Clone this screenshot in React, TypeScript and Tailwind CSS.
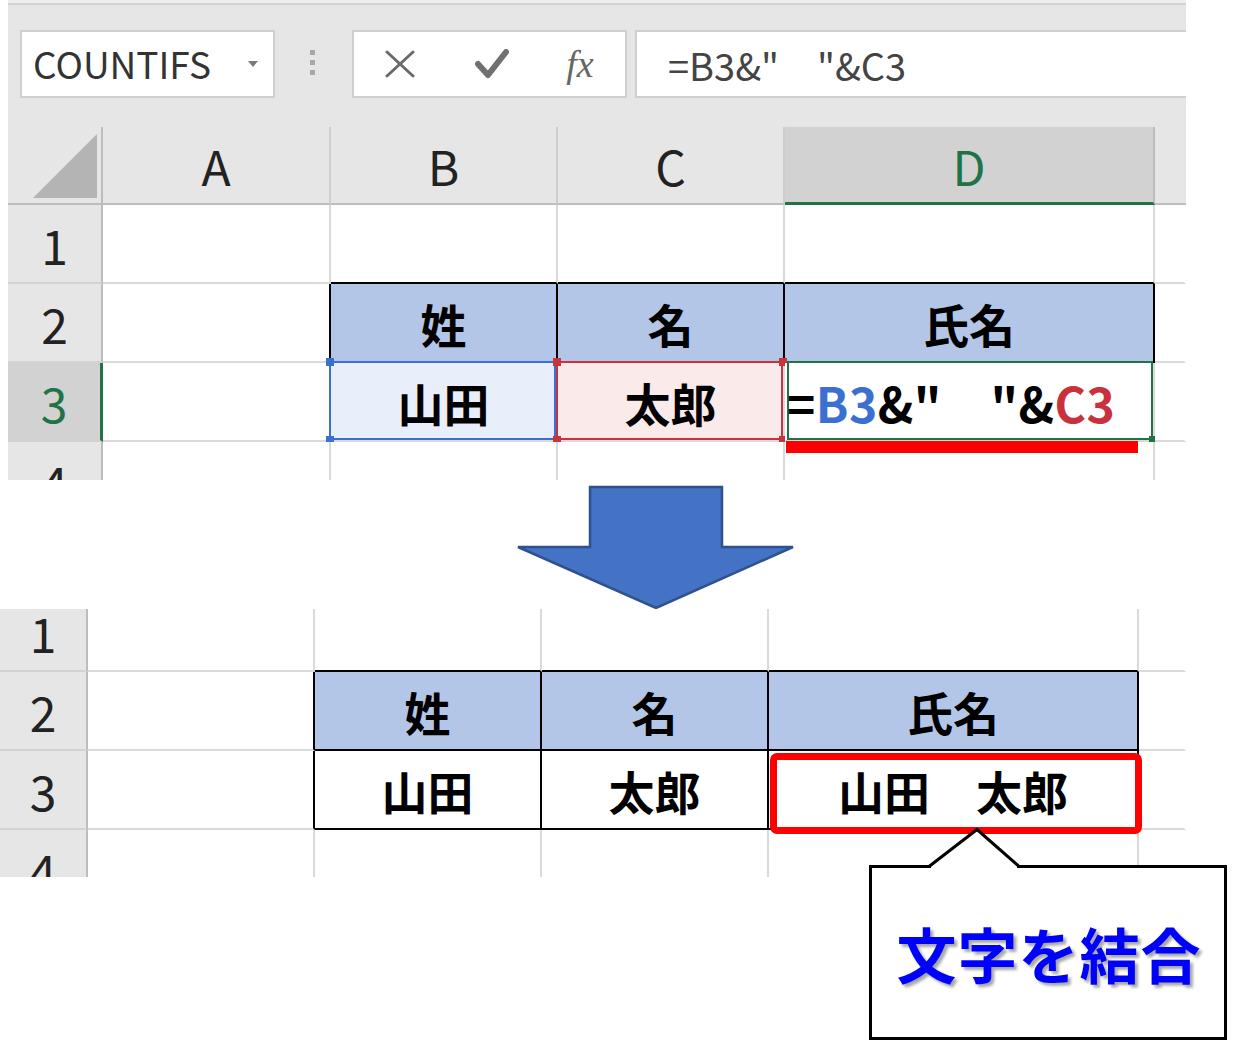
import React from "react";

const jp = "[font-family:'Noto_Sans_CJK_JP','Noto_Sans',sans-serif]";

type Side = "g" | "k" | "n";

const rightBorder: Record<Side, string> = {
  g: "border-r-2 border-r-[#dadada]",
  k: "border-r-2 border-r-black",
  n: "border-r-2 border-r-transparent",
};
const bottomBorder: Record<Side, string> = {
  g: "border-b-2 border-b-[#dadada]",
  k: "border-b-2 border-b-black",
  n: "border-b-2 border-b-transparent",
};

function Cell({
  r = "g",
  b = "g",
  bg = "bg-white",
  className = "",
  children,
}: {
  r?: Side;
  b?: Side;
  bg?: string;
  className?: string;
  children?: React.ReactNode;
}) {
  return (
    <div
      className={`relative flex items-center justify-center ${rightBorder[r]} ${bottomBorder[b]} ${bg} ${className}`}
    >
      {children}
    </div>
  );
}

function RowHead({ n, selected = false }: { n: number; selected?: boolean }) {
  return (
    <div
      className={`flex items-center justify-center border-b-2 border-b-[#d2d2d2] text-[48px] leading-none ${
        selected
          ? "bg-[#d2d2d2] border-r-[3px] border-r-[#217346] text-[#217346]"
          : "bg-[#e6e6e6] border-r-2 border-r-[#bdbdbd] text-[#222]"
      }`}
    >
      {n}
    </div>
  );
}

function Handle({ pos, color }: { pos: string; color: string }) {
  return <span className={`absolute w-[8px] h-[8px] ${pos} ${color}`} />;
}

function Toolbar() {
  return (
    <div className="h-[127px] shrink-0 flex flex-col">
      <div className="h-[3px] bg-[#efefef]" />
      <div className="flex-1 border-t-2 border-[#d2d2d2] flex items-start pt-[25px]">
        {/* name box */}
        <div className="ml-[12px] w-[255px] h-[68px] bg-white border-2 border-[#cfcfcf] flex items-center justify-between pl-[11px] pr-[14px]">
          <span className="text-[37px] text-[#333]">COUNTIFS</span>
          <svg width="12" height="8" viewBox="0 0 12 8">
            <path d="M1 1 L11 1 L6 7 Z" fill="#7a7a7a" />
          </svg>
        </div>
        {/* dots */}
        <div className="ml-[35px] mt-[20px] flex flex-col gap-[5px]">
          <span className="w-[5px] h-[5px] bg-[#a8a8a8]" />
          <span className="w-[5px] h-[5px] bg-[#a8a8a8]" />
          <span className="w-[5px] h-[5px] bg-[#a8a8a8]" />
        </div>
        {/* formula buttons */}
        <div className="ml-[37px] w-[275px] h-[68px] bg-white border-2 border-[#cfcfcf] flex items-center">
          <div className="w-[92px] flex justify-center">
            <svg width="30" height="30" viewBox="0 0 30 30">
              <path d="M2 3 L28 27 M28 3 L2 27" stroke="#6a6a6a" strokeWidth="3" strokeLinecap="round" />
            </svg>
          </div>
          <div className="w-[92px] flex justify-center">
            <svg width="34" height="30" viewBox="0 0 34 30">
              <path d="M3 15 L13 26 L31 3" stroke="#707070" strokeWidth="6" fill="none" strokeLinejoin="round" strokeLinecap="round" />
            </svg>
          </div>
          <div className="w-[84px] flex justify-center">
            <span className="[font-family:'Liberation_Serif',serif] italic text-[38px] text-[#666] leading-none">
              fx
            </span>
          </div>
        </div>
        {/* formula box */}
        <div className="ml-[8px] flex-1 h-[68px] bg-white border-y-2 border-l-2 border-[#cfcfcf] flex items-center pl-[31px]">
          <span className="text-[38px] text-[#444] whitespace-pre">=B3&amp;"　"&amp;C3</span>
        </div>
      </div>
    </div>
  );
}

function TopSheet() {
  return (
    <div className={`ml-[8px] w-[1178px] h-[480px] overflow-hidden bg-[#e6e6e6] flex flex-col ${jp}`}>
      <Toolbar />
      <div className="shrink-0 grid grid-cols-[95px_228px_227px_227px_370px_31px] grid-rows-[78px_79px_79px_79px_79px]">
        {/* column headers */}
        <div className="relative bg-[#e6e6e6] border-r-2 border-r-[#bdbdbd] border-b-2 border-b-[#bdbdbd]">
          <svg className="absolute left-[24px] top-[6px]" width="66" height="66" viewBox="0 0 66 66">
            <path d="M1 65 L65 65 L65 1 Z" fill="#b4b4b4" />
          </svg>
        </div>
        {["A", "B", "C"].map((c) => (
          <div
            key={c}
            className="flex items-center justify-center bg-[#e6e6e6] border-r-2 border-r-[#cdcdcd] border-b-2 border-b-[#bdbdbd] text-[48px] leading-none text-[#222]"
          >
            {c}
          </div>
        ))}
        <div className="flex items-center justify-center bg-[#d2d2d2] border-r-2 border-r-[#bdbdbd] border-b-[3px] border-b-[#217346] text-[48px] leading-none text-[#217346]">
          D
        </div>
        <div className="bg-[#e6e6e6] border-b-2 border-b-[#bdbdbd]" />

        {/* row 1 */}
        <RowHead n={1} />
        <Cell />
        <Cell b="k" />
        <Cell b="k" />
        <Cell b="k" />
        <Cell r="n" />

        {/* row 2 */}
        <RowHead n={2} />
        <Cell r="k" />
        {["姓", "名"].map((t) => (
          <Cell key={t} r="k" b="k" bg="bg-[#b4c6e7]">
            <span className="text-[46px] font-bold text-black leading-none">{t}</span>
          </Cell>
        ))}
        <Cell r="k" b="k" bg="bg-[#b4c6e7]">
          <span className="text-[46px] font-bold text-black leading-none">氏名</span>
        </Cell>
        <Cell r="n" />

        {/* row 3 */}
        <RowHead n={3} selected />
        <Cell />
        <Cell bg="bg-[#e8effa]">
          <span className="absolute -left-[2px] -top-[2px] right-0 bottom-0 border-2 border-[#3a70d0]" />
          <Handle pos="-left-[5px] -top-[5px]" color="bg-[#3a70d0]" />
          <Handle pos="-left-[5px] -bottom-[4px]" color="bg-[#3a70d0]" />
          <span className="text-[46px] font-bold text-black leading-none">山田</span>
        </Cell>
        <Cell bg="bg-[#fbeaea]">
          <span className="absolute -left-[2px] -top-[2px] right-0 bottom-0 border-2 border-[#c8343e]" />
          <Handle pos="-left-[5px] -top-[5px]" color="bg-[#c8343e]" />
          <Handle pos="-left-[5px] -bottom-[4px]" color="bg-[#c8343e]" />
          <Handle pos="-right-[4px] -top-[5px]" color="bg-[#c8343e]" />
          <Handle pos="-right-[4px] -bottom-[4px]" color="bg-[#c8343e]" />
          <span className="text-[46px] font-bold text-black leading-none">太郎</span>
        </Cell>
        <Cell className="!justify-start pl-[2px]">
          <span className="absolute left-[2px] -top-[2px] right-0 bottom-0 border-2 border-[#217346]" />
          <Handle pos="-right-[4px] -bottom-[4px]" color="bg-[#217346]" />
          <span className="absolute left-[1px] top-full mt-[1px] w-[352px] h-[12px] bg-[#ff0000] z-10" />
          <span className="relative text-[48px] font-bold leading-none whitespace-pre text-black tracking-[0.5px]">
            =<span className="text-[#3b70d2]">B3</span>&amp;"　"&amp;<span className="text-[#c9323c]">C3</span>
          </span>
        </Cell>
        <Cell r="n" />

        {/* row 4 */}
        <RowHead n={4} />
        <Cell />
        <Cell />
        <Cell />
        <Cell />
        <Cell r="n" />
      </div>
    </div>
  );
}

function Arrow() {
  return (
    <div className="h-[129px] pt-[5px]">
      <svg className="block ml-[516px]" width="280" height="124" viewBox="0 0 280 124">
        <path
          d="M74 2 L206 2 L206 62 L277 62 L140 123 L2 62 L74 62 Z"
          fill="#4472c4"
          stroke="#2f528f"
          strokeWidth="2.5"
          strokeLinejoin="miter"
        />
      </svg>
    </div>
  );
}

function BottomSheet() {
  return (
    <div className={`w-[1186px] h-[268px] overflow-hidden ${jp}`}>
      <div className="-mt-[16px] grid grid-cols-[88px_227px_227px_227px_370px_47px] grid-rows-[79px_79px_79px_79px]">
        {/* row 1 */}
        <RowHead n={1} />
        <Cell />
        <Cell b="k" />
        <Cell b="k" />
        <Cell b="k" />
        <Cell r="n" />

        {/* row 2 */}
        <RowHead n={2} />
        <Cell r="k" />
        {["姓", "名"].map((t) => (
          <Cell key={t} r="k" b="k" bg="bg-[#b4c6e7]">
            <span className="text-[46px] font-bold text-black leading-none">{t}</span>
          </Cell>
        ))}
        <Cell r="k" b="k" bg="bg-[#b4c6e7]">
          <span className="text-[46px] font-bold text-black leading-none">氏名</span>
        </Cell>
        <Cell r="n" />

        {/* row 3 */}
        <RowHead n={3} />
        <Cell r="k" />
        <Cell r="k" b="k">
          <span className="text-[46px] font-bold text-black leading-none">山田</span>
        </Cell>
        <Cell r="k" b="k">
          <span className="text-[46px] font-bold text-black leading-none">太郎</span>
        </Cell>
        <Cell r="k" b="k">
          <span className="absolute left-[1px] top-[2px] w-[372px] h-[81px] border-[7px] border-[#ff0000] rounded-[7px] z-10" />
          <span className="text-[46px] font-bold text-black leading-none whitespace-pre">山田　太郎</span>
        </Cell>
        <Cell r="n" />

        {/* row 4 */}
        <RowHead n={4} />
        <Cell />
        <Cell />
        <Cell />
        <Cell />
        <Cell r="n" />
      </div>
    </div>
  );
}

function Callout() {
  return (
    <div className="absolute left-[869px] top-[865px] w-[358px] h-[175px] z-20">
      <div className={`w-full h-full bg-white border-[3px] border-black flex items-center justify-center pl-[2px] ${jp}`}>
        <span className="text-[60px] font-bold text-[#0000ff] leading-none tracking-[1px] [text-shadow:3px_3px_3px_rgba(0,0,0,0.35)]">
          文字を結合
        </span>
      </div>
      <svg className="absolute left-0 -top-[40px]" width="358" height="44" viewBox="0 0 358 44">
        <path d="M62 44 L62 41 L108 5 L148 41 L148 44 Z" fill="white" />
        <path d="M60 41.5 L108 4.5 L150 41.5" stroke="black" strokeWidth="3" fill="none" />
      </svg>
    </div>
  );
}

export default function App() {
  return (
    <div className="relative w-[1240px] h-[1041px] bg-white overflow-hidden">
      <TopSheet />
      <Arrow />
      <BottomSheet />
      <Callout />
    </div>
  );
}
